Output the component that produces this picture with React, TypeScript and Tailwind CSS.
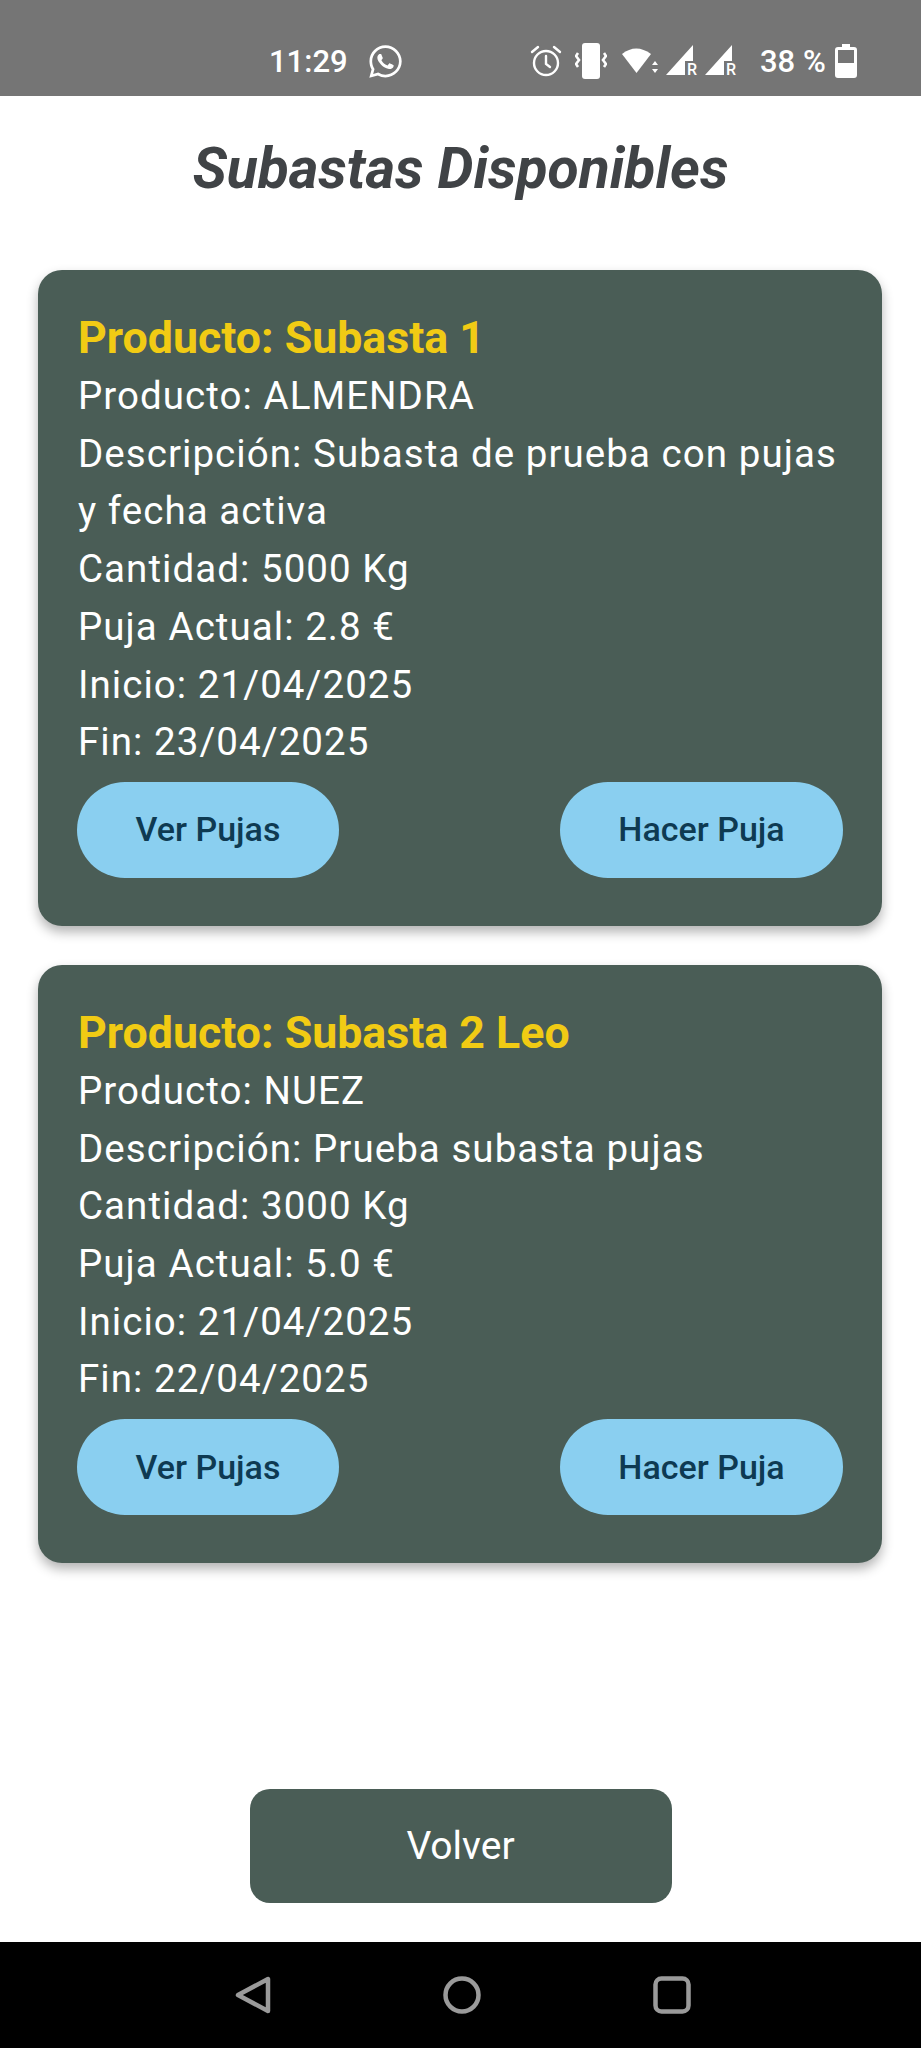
import { FaWhatsapp } from "react-icons/fa"

type Subasta = {
    titulo: string
    producto: string
    descripcion: string
    cantidad: string
    puja: string
    inicio: string
    fin: string
}

const subastas: Subasta[] = [
    {
        titulo: "Producto: Subasta 1",
        producto: "ALMENDRA",
        descripcion: "Subasta de prueba con pujas y fecha activa",
        cantidad: "5000 Kg",
        puja: "2.8 €",
        inicio: "21/04/2025",
        fin: "23/04/2025",
    },
    {
        titulo: "Producto: Subasta 2 Leo",
        producto: "NUEZ",
        descripcion: "Prueba subasta pujas",
        cantidad: "3000 Kg",
        puja: "5.0 €",
        inicio: "21/04/2025",
        fin: "22/04/2025",
    },
]

const SignalIcon = ({ className }: { className: string }) => {
    return (
        <svg viewBox="0 -3 36 40" className={className}>
            <path d="M0 31L27 1v16h-8v14Z" fill="white" />
            <text x="21" y="31" fontSize="16" fontFamily="Roboto" fontWeight="500" fill="white">R</text>
        </svg>
    )
}

const StatusBar = () => {
    return (
        <div className="flex h-[96px] shrink-0 items-center bg-[#757575] pl-[269px] pt-[26px] text-white">
            <span className="w-[78px] text-[31px] font-medium leading-none">11:29</span>
            <FaWhatsapp className="ml-[20px] h-[37px] w-[37px]" />
            {/* alarm */}
            <svg viewBox="0 0 34 34" className="ml-[125px] h-[34px] w-[34px]" fill="none" stroke="white" strokeWidth="2.4">
                <circle cx="17" cy="19" r="12" />
                <path d="M17 12v8l4 3M3 8l6-5M31 8l-6-5" strokeLinecap="round" />
            </svg>
            {/* vibrate */}
            <svg viewBox="0 0 32 36" className="ml-[12px] h-[36px] w-[32px]" fill="none">
                <rect x="7" y="0" width="18" height="36" rx="3" fill="white" />
                <path d="M3 10l-2 3 3 4-3 4 2 3M29 10l2 3-3 4 3 4-2 3" stroke="white" strokeWidth="2.600" />
            </svg>
            {/* wifi */}
            <svg viewBox="0 0 38 30" className="ml-[15px] h-[30px] w-[38px]">
                <path d="M0 8Q14-3 29 8L14.500 27Z" fill="white" />
                <path d="M33 15l3 4h-6ZM33 27l3-4h-6Z" fill="white" />
            </svg>
            <SignalIcon className="ml-[6px] h-[40px] w-[36px]" />
            <SignalIcon className="ml-[3px] h-[40px] w-[36px]" />
            <span className="ml-[19px] text-[31px] font-medium leading-none">38 %</span>
            {/* battery */}
            <svg viewBox="0 0 22 34" className="ml-[9px] h-[34px] w-[22px]">
                <path d="M7 0h8v3h4a3 3 0 0 1 3 3v25a3 3 0 0 1-3 3H3a3 3 0 0 1-3-3V6a3 3 0 0 1 3-3h4Z" fill="white" />
                <rect x="3" y="6" width="16" height="13" fill="#757575" />
            </svg>
        </div>
    )
}

const SubastaCard = ({ subasta }: { subasta: Subasta }) => {
    return (
        <div className="rounded-[24px] bg-[#4a5d56] px-[40px] pt-[39px] pb-[48px] shadow-[0_6px_12px_rgba(0,0,0,0.3)]">
            <h2 className="text-[44.7px] font-bold leading-[58px] text-[#f1cb14] whitespace-nowrap">{subasta.titulo}</h2>
            <div className="text-[38.5px] leading-[57.7px] tracking-[1.05px] text-white">
                <p>Producto: {subasta.producto}</p>
                <p>Descripción: {subasta.descripcion}</p>
                <p>Cantidad: {subasta.cantidad}</p>
                <p>Puja Actual: {subasta.puja}</p>
                <p>Inicio: {subasta.inicio}</p>
                <p>Fin: {subasta.fin}</p>
            </div>
            <div className="mt-[11px] flex justify-between">
                <button className="h-[96px] w-[262px] -ml-px rounded-[48px] bg-[#8acff0] text-[34px] font-medium text-[#0e3a52]">
                    Ver Pujas
                </button>
                <button className="h-[96px] w-[283px] -mr-px rounded-[48px] bg-[#8acff0] text-[34px] font-medium text-[#0e3a52]">
                    Hacer Puja
                </button>
            </div>
        </div>
    )
}

const App = () => {
    return (
        <div className="flex h-[2048px] w-[921px] flex-col overflow-hidden bg-white font-['Roboto',sans-serif]">
            <StatusBar />
            <h1 className="mt-[38px] text-center text-[57px] font-bold italic leading-[70px] text-[#404346]">
                Subastas Disponibles
            </h1>
            <div className="mt-[66px] flex flex-col gap-[39px] pl-[38px] pr-[39px]">
                {subastas.map((subasta) => (
                    <SubastaCard key={subasta.titulo} subasta={subasta} />
                ))}
            </div>
            <div className="mt-auto flex justify-center pb-[39px]">
                <button className="h-[114px] w-[422px] rounded-[20px] bg-[#4a5d56] text-[39px] text-white">
                    Volver
                </button>
            </div>
            <div className="flex h-[106px] shrink-0 items-center justify-center gap-[172px] bg-black pl-[4px]">
                <svg viewBox="0 0 36 38" className="h-[38px] w-[36px]" fill="none" stroke="#9a9a9a" strokeWidth="4.500" strokeLinejoin="round">
                    <path d="M33 3v32L3 19Z" />
                </svg>
                <svg viewBox="0 0 38 38" className="h-[38px] w-[38px]" fill="none" stroke="#9a9a9a" strokeWidth="4.500">
                    <circle cx="19" cy="19" r="16.500" />
                </svg>
                <svg viewBox="0 0 38 38" className="h-[38px] w-[38px]" fill="none" stroke="#9a9a9a" strokeWidth="4.500">
                    <rect x="2.500" y="2.500" width="33" height="33" rx="6" />
                </svg>
            </div>
        </div>
    )
}

export default App
